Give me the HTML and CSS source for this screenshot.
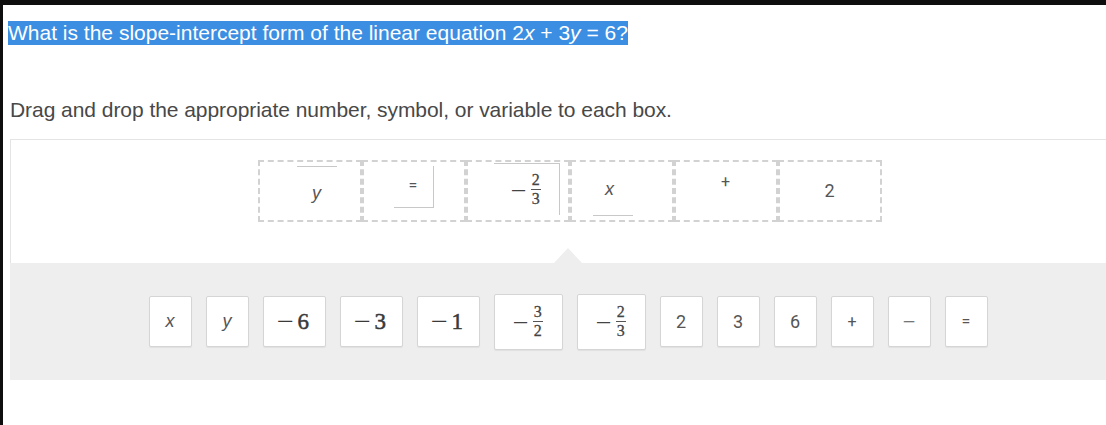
FILE: index.html
```html
<!DOCTYPE html>
<html>
<head>
<meta charset="utf-8">
<link rel="stylesheet" href="styles.css">
</head>
<body>
<div class="screen">
  <p class="question"><span class="hl">What is the slope-intercept form of the linear equation 2<i>x</i> + 3<i>y</i> = 6?</span></p>
  <p class="instr">Drag and drop the appropriate number, symbol, or variable to each box.</p>
  <div class="widget">
    <div class="targets">
      <div class="zones">
        <div class="zone"><div class="placed p-y"><span class="var">y</span></div></div>
        <div class="zone"><div class="placed p-eq"><span class="op">=</span></div></div>
        <div class="zone"><div class="placed p-frac"><span class="mathfrac"><span class="neg">−</span><span class="frac"><span class="num">2</span><span class="den">3</span></span></span></div></div>
        <div class="zone"><div class="placed p-x"><span class="var">x</span></div></div>
        <div class="zone"><div class="placed p-plus"><span class="op">+</span></div></div>
        <div class="zone"><div class="placed p-two"><span class="digit">2</span></div></div>
      </div>
    </div>
    <div class="bank">
      <div class="tile t-s"><span class="var">x</span></div>
      <div class="tile t-s"><span class="var">y</span></div>
      <div class="tile t-m"><span class="serif"><span class="sneg">−</span>6</span></div>
      <div class="tile t-m"><span class="serif"><span class="sneg">−</span>3</span></div>
      <div class="tile t-m"><span class="serif"><span class="sneg">−</span>1</span></div>
      <div class="tile t-f"><span class="mathfrac"><span class="neg">−</span><span class="frac"><span class="num">3</span><span class="den">2</span></span></span></div>
      <div class="tile t-f"><span class="mathfrac"><span class="neg">−</span><span class="frac"><span class="num">2</span><span class="den">3</span></span></span></div>
      <div class="tile t-s"><span class="digit">2</span></div>
      <div class="tile t-s"><span class="digit">3</span></div>
      <div class="tile t-s"><span class="digit">6</span></div>
      <div class="tile t-s"><span class="op">+</span></div>
      <div class="tile t-s"><span class="op op-minus">−</span></div>
      <div class="tile t-s"><span class="op">=</span></div>
    </div>
  </div>
</div>
</body>
</html>
```
FILE: styles.css
```css
html, body {
  margin: 0;
  padding: 0;
  background: #fff;
}
body {
  width: 1106px;
  height: 425px;
  overflow: hidden;
  font-family: "Liberation Sans", Arial, sans-serif;
}
.screen {
  border-top: 5px solid #0e0e0e;
  border-left: 3px solid #0e0e0e;
  height: 425px;
  box-sizing: border-box;
  width: 1130px;
}
.question {
  margin: 0;
  padding: 16px 0 0 5px;
  font-size: 21px;
  line-height: 24px;
  height: 24px;
}
.hl {
  background: #3b8ee2;
  color: #fff;
  display: inline-block;
}
.instr {
  margin: 53px 0 0 7px;
  font-size: 21px;
  line-height: 24px;
  color: #484848;
  letter-spacing: -0.05px;
}
.widget {
  margin: 17px 0 0 7px;
  width: 1116px;
}
.targets {
  height: 124px;
  box-sizing: border-box;
  border-top: 1px solid #e4e4e4;
  border-left: 1px solid #e4e4e4;
  padding-top: 20px;
  display: flex;
  justify-content: center;
}
.zones {
  display: flex;
  height: 62px;
  margin-left: 2px;
}
.zone {
  width: 104px;
  height: 62px;
  box-sizing: border-box;
  border: 2px dashed #d2d2d2;
  display: flex;
  justify-content: center;
  align-items: flex-start;
}
.placed {
  background: #fff;
  display: flex;
  align-items: center;
  justify-content: center;
  box-sizing: border-box;
  color: #555;
}
.p-y {
  width: 40px;
  height: 50px;
  margin: 4px 0 0 14px;
  border-top: 1px solid #c8c8c8;
  padding-top: 4px;
}
.p-eq {
  width: 40px;
  height: 42px;
  margin: 4px 0 0 0;
  border-right: 1px solid #c8c8c8;
  border-bottom: 1px solid #c8c8c8;
  align-items: flex-start;
  padding-top: 10px;
}
.p-frac {
  width: 66px;
  height: 52px;
  margin: 1px 0 0 18px;
  border-top: 1px solid #c8c8c8;
  border-right: 1px solid #c8c8c8;
}
.p-x {
  width: 40px;
  height: 52px;
  margin: 2px 0 0 -18px;
  border-bottom: 1px solid #c8c8c8;
  padding-right: 6px;
}
.p-plus {
  width: 40px;
  height: 42px;
  margin: 0 0 0 0;
  align-items: flex-start;
  padding-top: 10px;
}
.p-two {
  width: 42px;
  height: 52px;
  margin: 2px 0 0 0;
}
.bank {
  position: relative;
  height: 117px;
  background: #eeeeee;
  display: flex;
  justify-content: center;
  align-items: center;
  gap: 14px;
}
.bank::before {
  content: "";
  position: absolute;
  top: -15px;
  left: 50%;
  margin-left: -14px;
  border-left: 14px solid transparent;
  border-right: 14px solid transparent;
  border-bottom: 15px solid #eeeeee;
}
.tile {
  background: #fff;
  border: 1px solid #d5d5d5;
  border-radius: 2px;
  box-shadow: 0 1px 1px rgba(0,0,0,0.06);
  box-sizing: border-box;
  height: 51px;
  display: flex;
  align-items: center;
  justify-content: center;
  color: #555;
}
.t-s { width: 43px; }
.t-m { width: 63px; }
.t-f { width: 69px; height: 56px; }
.var {
  font-family: "Liberation Sans", Arial, sans-serif;
  font-style: italic;
  font-size: 18px;
  color: #555;
}
.digit {
  font-family: Roboto, "Liberation Sans", sans-serif;
  font-size: 18px;
  color: #555;
}
.op {
  font-family: Roboto, "Liberation Sans", sans-serif;
  font-size: 16px;
  color: #555;
}
.op-minus {
  font-family: "DejaVu Sans", sans-serif;
  font-size: 13px;
  display: inline-block;
  transform: scaleX(1.3);
}
.serif {
  font-family: "Liberation Serif", "Times New Roman", serif;
  font-size: 23px;
  color: #3a3a3a;
  -webkit-text-stroke: 0.5px #3a3a3a;
  display: inline-flex;
  align-items: center;
}
.sneg {
  font-family: "DejaVu Sans", sans-serif;
  font-size: 15px;
  display: inline-block;
  transform: scaleX(1.5);
  margin: 0 6px 0 0;
  position: relative;
  top: -1px;
  -webkit-text-stroke: 0;
}
.mathfrac {
  display: inline-flex;
  align-items: center;
  font-family: "Liberation Serif", "Times New Roman", serif;
  color: #444;
}
.neg {
  font-family: "DejaVu Sans", sans-serif;
  font-size: 14px;
  display: inline-block;
  transform: scaleX(1.5);
  margin: 0 6px 0 2px;
}
.frac {
  display: inline-flex;
  flex-direction: column;
  align-items: center;
  font-size: 16px;
  line-height: 1;
  -webkit-text-stroke: 0.3px #444;
}
.num {
  border-bottom: 1px solid #555;
  padding: 0 1px 1px;
}
.den {
  padding-top: 1px;
}
```
